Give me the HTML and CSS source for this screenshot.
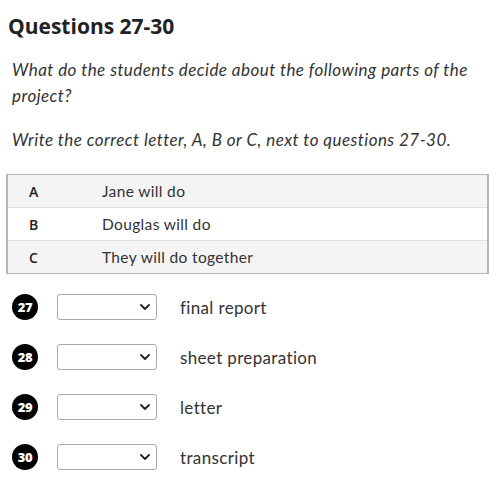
FILE: index.html
```html
<!DOCTYPE html>
<html>
<head>
<meta charset="utf-8">
<link rel="stylesheet" href="styles.css">
</head>
<body>
<h2 class="title">Questions 27-30</h2>
<div class="instructions">
  <p class="para">What do the students decide about the following parts of the project?</p>
  <p class="para">Write the correct letter, A, B or C, next to questions 27-30.</p>
</div>
<div class="options">
  <div class="opt shade"><span class="letter">A</span><span class="desc">Jane will do</span></div>
  <div class="opt"><span class="letter">B</span><span class="desc">Douglas will do</span></div>
  <div class="opt shade"><span class="letter">C</span><span class="desc">They will do together</span></div>
</div>
<div class="questions">
  <div class="q"><span class="num">27</span><span class="sel"><select class="dropdown"><option></option></select><svg class="chev" viewBox="0 0 10 6" width="10" height="6"><path d="M1 1l4 4 4-4" fill="none" stroke="#222" stroke-width="1.8" stroke-linecap="round" stroke-linejoin="round"/></svg></span><span class="label">final report</span></div>
  <div class="q"><span class="num">28</span><span class="sel"><select class="dropdown"><option></option></select><svg class="chev" viewBox="0 0 10 6" width="10" height="6"><path d="M1 1l4 4 4-4" fill="none" stroke="#222" stroke-width="1.8" stroke-linecap="round" stroke-linejoin="round"/></svg></span><span class="label">sheet preparation</span></div>
  <div class="q"><span class="num">29</span><span class="sel"><select class="dropdown"><option></option></select><svg class="chev" viewBox="0 0 10 6" width="10" height="6"><path d="M1 1l4 4 4-4" fill="none" stroke="#222" stroke-width="1.8" stroke-linecap="round" stroke-linejoin="round"/></svg></span><span class="label">letter</span></div>
  <div class="q"><span class="num">30</span><span class="sel"><select class="dropdown"><option></option></select><svg class="chev" viewBox="0 0 10 6" width="10" height="6"><path d="M1 1l4 4 4-4" fill="none" stroke="#222" stroke-width="1.8" stroke-linecap="round" stroke-linejoin="round"/></svg></span><span class="label">transcript</span></div>
</div>
</body>
</html>
```

FILE: styles.css
```css
html, body {
  margin: 0;
  padding: 0;
  background: #fff;
}
body {
  font-family: "Lato", "Open Sans", sans-serif;
  color: #333;
  padding: 14px 7px 0 6px;
}
.title {
  margin: 0 0 0 2px;
  font-family: "Open Sans", sans-serif;
  font-weight: 700;
  font-size: 21px;
  line-height: 24px;
  color: #222;
}
.instructions {
  padding: 19px 0 0 6px;
}
.para {
  margin: 0 0 18px 0;
  font-style: italic;
  font-size: 17px;
  letter-spacing: 0.45px;
  line-height: 26px;
  color: #333;
}
.para:last-child {
  margin-bottom: 21px;
}
.options {
  margin-top: 0;
  border: 2px solid #b5b5b5;
  border-top-width: 1px;
  border-bottom-width: 1px;
}
.opt {
  display: flex;
  align-items: center;
  height: 32px;
  font-size: 15.5px;
  letter-spacing: 0.35px;
  color: #333;
  border-top: 1px solid #ddd;
}
.opt:first-child {
  border-top: none;
}
.shade {
  background: #f4f4f4;
}
.letter {
  width: 94px;
  padding-left: 21px;
  box-sizing: border-box;
  font-family: "Open Sans", sans-serif;
  font-weight: 600;
  font-size: 14px;
  letter-spacing: 0;
  color: #222;
}
.questions {
  padding: 20px 0 0 6px;
  display: flex;
  flex-direction: column;
  gap: 24px;
}
.q {
  display: flex;
  align-items: center;
  height: 26px;
}
.num {
  width: 26px;
  height: 26px;
  border-radius: 50%;
  background: #000;
  color: #fff;
  font-family: "Open Sans", sans-serif;
  font-weight: 800;
  font-size: 13px;
  display: flex;
  align-items: center;
  justify-content: center;
  letter-spacing: -0.4px;
}
.sel {
  position: relative;
  margin-left: 19px;
  width: 100px;
  height: 26px;
}
.dropdown {
  appearance: none;
  -webkit-appearance: none;
  width: 100px;
  height: 26px;
  border: 1px solid #aaa;
  border-radius: 3px;
  background: #fff;
  margin: 0;
  display: block;
}
.chev {
  position: absolute;
  right: 7px;
  top: 10px;
}
.label {
  margin-left: 23px;
  font-size: 17px;
  letter-spacing: 0.35px;
  color: #333;
}
```
